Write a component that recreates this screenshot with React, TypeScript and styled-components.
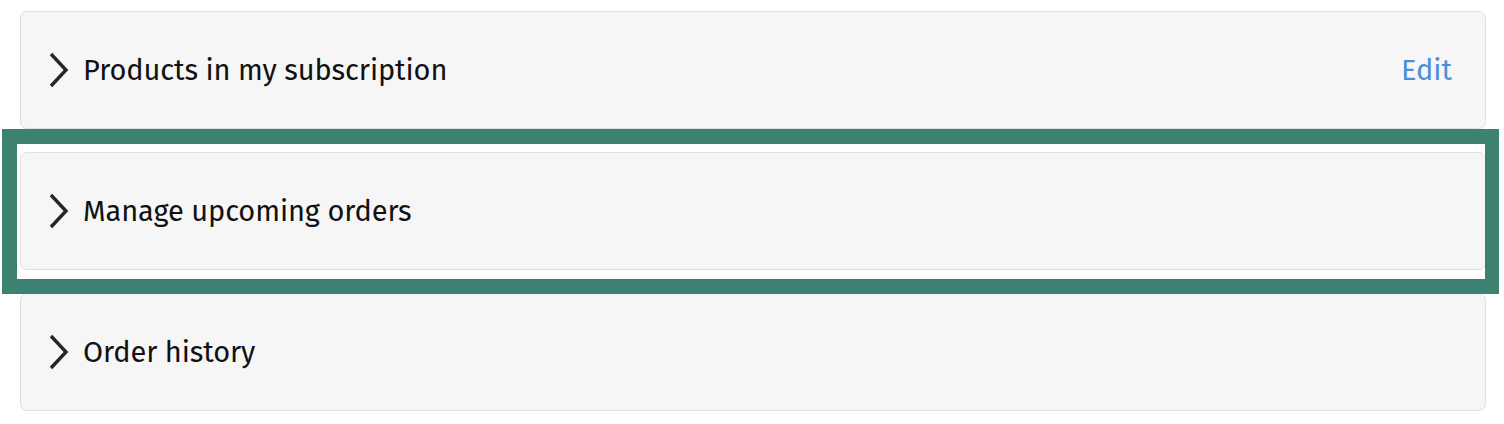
import React from "react";
import styled, { createGlobalStyle } from "styled-components";

const Global = createGlobalStyle`
  html, body { margin: 0; padding: 0; background: #ffffff; }
  body { font-family: "Fira Sans", Roboto, "Liberation Sans", sans-serif; }
`;

const Page = styled.div`
  position: relative;
  width: 1504px;
  height: 424px;
  box-sizing: border-box;
  padding: 11px 18px 0 20px;
  display: flex;
  flex-direction: column;
  gap: 23px;
`;

const Card = styled.div`
  height: 118px;
  box-sizing: border-box;
  background: #f6f6f6;
  border: 1.5px solid #e0e0e0;
  border-radius: 7px;
  display: flex;
  align-items: center;
  padding: 0 33px 0 27px;
`;

const Chevron = styled.svg`
  width: 22px;
  height: 36px;
  flex: none;
  margin-right: 13px;
`;

const Title = styled.span`
  flex: 1;
  font-size: 29px;
  color: #111111;
  letter-spacing: -0.1px;
`;

const EditLink = styled.a`
  font-size: 29px;
  color: #4a90d6;
  text-decoration: none;
  cursor: pointer;
`;

const Highlight = styled.div`
  position: absolute;
  left: 2px;
  top: 129px;
  width: 1497px;
  height: 165px;
  box-sizing: border-box;
  border: 15px solid #3d8270;
  border-right-width: 14px;
  pointer-events: none;
`;

const Arrow = () => (
  <Chevron viewBox="0 0 22 36">
    <polyline
      points="3,2 18,18 3,34"
      fill="none"
      stroke="#262626"
      strokeWidth="3.4"
      strokeLinecap="butt"
      strokeLinejoin="miter"
    />
  </Chevron>
);

const items = [
  { title: "Products in my subscription", edit: true },
  { title: "Manage upcoming orders", edit: false },
  { title: "Order history", edit: false },
];

export default function App() {
  return (
    <>
      <Global />
      <Page>
        {items.map((it) => (
          <Card key={it.title}>
            <Arrow />
            <Title>{it.title}</Title>
            {it.edit && <EditLink>Edit</EditLink>}
          </Card>
        ))}
        <Highlight />
      </Page>
    </>
  );
}
